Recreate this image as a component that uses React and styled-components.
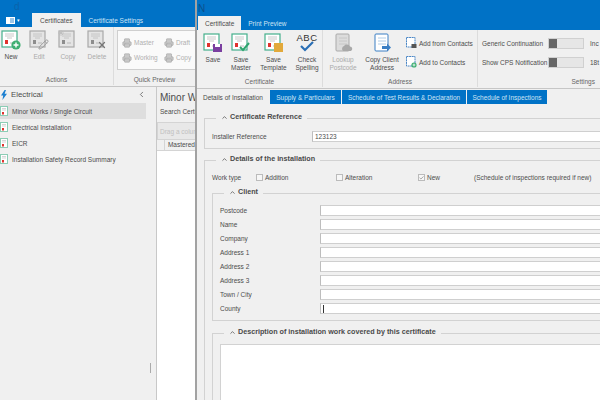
import styled, { createGlobalStyle } from "styled-components";
import { ChevronUp, ChevronLeft, Check, Pencil, X, Printer } from "lucide-react";

const Global = createGlobalStyle`
  html, body { margin: 0; padding: 0; height: 100%; overflow: hidden; background: #f0f0f0; }
  body { font-family: "Liberation Sans", Arial, sans-serif; font-size: 6.5px; color: #4c4c4c; }
`;

const Desktop = styled.div`
  width: 600px;
  height: 400px;
  display: flex;
  overflow: hidden;
`;

const BackWindow = styled.div`
  width: 195px;
  flex: none;
  display: flex;
  flex-direction: column;
  overflow: hidden;
`;

const FrontWindow = styled.div`
  flex: 1;
  min-width: 0;
  display: flex;
  flex-direction: column;
  border-left: 2px solid #a2a2a2;
  overflow: hidden;
`;

const TitleBar = styled.div`
  height: ${(p) => p.$h}px;
  flex: none;
  background: #0072c6;
  display: flex;
  align-items: center;
  padding-left: ${(p) => p.$pad}px;
  font-size: 10px;
  color: ${(p) => p.$ink};
`;

const TabRow = styled.div`
  height: 14px;
  flex: none;
  background: #0072c6;
  display: flex;
  align-items: stretch;
  padding-left: ${(p) => p.$pad}px;
`;

const AppButton = styled.div`
  width: 21px;
  margin-right: 5px;
  display: flex;
  align-items: center;
  gap: 2px;
  color: #fff;
  font-size: 5px;
`;

const AppGlyph = styled.span`
  width: 7px;
  height: 5px;
  border: 1px solid #fff;
  background: linear-gradient(90deg, #fff 50%, #9cc6e8 50%);
`;

const Tab = styled.div`
  display: flex;
  align-items: center;
  padding: 0 ${(p) => p.$x}px;
  white-space: nowrap;
  color: ${(p) => (p.$active ? "#4c4c4c" : "#cfe4f5")};
  background: ${(p) => (p.$active ? "#f0f0f0" : "transparent")};
`;

const Ribbon = styled.div`
  height: ${(p) => p.$h}px;
  flex: none;
  display: flex;
  background: #f0f0f0;
  border-bottom: 1px solid #c6c6c6;
  overflow: hidden;
`;

const Group = styled.div`
  display: flex;
  flex-direction: column;
  flex: none;
  width: ${(p) => p.$w}px;
  padding: 3px ${(p) => p.$px ?? 0}px 0;
  border-right: ${(p) => (p.$last ? "none" : "1px solid #dcdcdc")};
  margin-bottom: 1px;
  box-sizing: border-box;
`;

const GroupBody = styled.div`
  flex: 1;
  display: flex;
  min-height: 0;
`;

const GroupLabel = styled.div`
  height: 11px;
  line-height: 11px;
  white-space: nowrap;
  text-align: ${(p) => p.$align ?? "center"};
  color: #666;
`;

const ToolButton = styled.div`
  width: ${(p) => p.$w ?? 32}px;
  flex: none;
  display: flex;
  flex-direction: column;
  align-items: center;
  text-align: center;
  line-height: 8px;
  color: ${(p) => (p.$off ? "#aaa" : "#4c4c4c")};
  white-space: pre-line;
  svg { margin-bottom: 3px; flex: none; }
`;

const SpellIcon = styled.div`
  height: 20px;
  margin-bottom: 3px;
  display: flex;
  flex-direction: column;
  align-items: center;
  font-size: 9.5px;
  line-height: 9px;
  letter-spacing: 0.5px;
  color: #333;
  svg { margin: -1px 0 0; }
`;

const PreviewBox = styled.div`
  width: 82px;
  height: 40px;
  background: #fafafa;
  border: 1px solid #cfcfcf;
  box-sizing: border-box;
  display: grid;
  grid-template-columns: 42px 36px;
  align-content: center;
  row-gap: 5px;
  padding-left: 4px;
  color: #b0b0b0;
`;

const PreviewItem = styled.div`
  display: flex;
  align-items: center;
  gap: 2px;
`;

const SmallStack = styled.div`
  display: flex;
  flex-direction: column;
  gap: 7px;
  padding-top: 4px;
  margin-left: ${(p) => p.$ml ?? 0}px;
`;

const SmallButton = styled.div`
  display: flex;
  align-items: center;
  gap: 2px;
  height: 12px;
  white-space: nowrap;
`;

const SettingRow = styled.div`
  display: flex;
  align-items: center;
  height: 12px;
  white-space: nowrap;
`;

const SettingName = styled.div`
  width: 66px;
`;

const Toggle = styled.div`
  width: 36px;
  height: 11px;
  background: #e6e6e6;
  border: 1px solid #d0d0d0;
  box-sizing: border-box;
  margin-right: 6px;
  flex: none;
  &::before {
    content: "";
    display: block;
    width: 8px;
    height: 100%;
    background: #666;
  }
`;

const Split = styled.div`
  flex: 1;
  min-height: 0;
  display: flex;
`;

const Sidebar = styled.div`
  width: 156px;
  flex: none;
  border-right: 1px solid #c8c8c8;
  position: relative;
`;

const SideHeader = styled.div`
  height: 16px;
  padding: 0 0 1px 1px;
  display: flex;
  align-items: center;
  gap: 4px;
  font-size: 7.8px;
  width: 146px;
  box-sizing: border-box;
  svg:last-child { margin-left: auto; }
`;

const SideItem = styled.div`
  height: 16px;
  width: 146px;
  display: flex;
  align-items: center;
  gap: 4px;
  white-space: nowrap;
  background: ${(p) => (p.$active ? "#dedede" : "transparent")};
`;

const GripHandle = styled.div`
  position: absolute;
  left: 150px;
  top: 276px;
  width: 1px;
  height: 10px;
  background: #aaa;
`;

const ListPane = styled.div`
  flex: 1;
  min-width: 0;
  display: flex;
  flex-direction: column;
  overflow: hidden;
  white-space: nowrap;
`;

const ListTitle = styled.div`
  font-size: 10px;
  padding: 3px 0 0 3px;
  height: 15px;
  line-height: 15px;
`;

const ListSearch = styled.div`
  padding: 3px 0 0 3px;
  height: 14px;
`;

const DragBar = styled.div`
  height: 18px;
  background: #e8e8e8;
  border: 1px solid #d4d4d4;
  border-right: 0;
  display: flex;
  align-items: center;
  padding-left: 2px;
  color: #c0c0c0;
  box-sizing: border-box;
`;

const GridHead = styled.div`
  height: 11px;
  display: flex;
  background: #f0f0f0;
  border-bottom: 1px solid #d4d4d4;
  line-height: 10px;
  box-sizing: border-box;
`;

const GridCorner = styled.div`
  width: 11px;
  border-right: 1px solid #d4d4d4;
  margin-right: 3px;
`;

const GridBody = styled.div`
  flex: 1;
  background: #fff;
`;

const SubTabs = styled.div`
  height: 14px;
  flex: none;
  display: flex;
  gap: 1px;
  margin-top: 1px;
  white-space: nowrap;
`;

const SubTab = styled.div`
  width: ${(p) => p.$w}px;
  flex: none;
  display: flex;
  align-items: center;
  justify-content: center;
  color: ${(p) => (p.$active ? "#4c4c4c" : "#cfe4f5")};
  background: ${(p) => (p.$active ? "#f0f0f0" : "#0072c6")};
`;

const FormArea = styled.div`
  flex: 1;
  min-height: 0;
  overflow: hidden;
  padding: 8px 0 0 7px;
  width: 440px;
  box-sizing: border-box;
`;

const Section = styled.fieldset`
  margin: 0 0 ${(p) => p.$mb ?? 0}px;
  padding: 0 0 0 7px;
  border: 1px solid #d2d2d2;
  min-width: 0;
  box-sizing: border-box;
  height: ${(p) => (p.$h ? `${p.$h}px` : "auto")};
`;

const Legend = styled.legend`
  margin-left: 4px;
  padding: 0 5px 3px;
  font-size: 7.2px;
  font-weight: bold;
  line-height: 10px;
  color: #4a4a4a;
  white-space: nowrap;
  display: flex;
  align-items: center;
  gap: 2px;
`;

const RowGroup = styled.div`
  padding: ${(p) => p.$top}px 0 ${(p) => p.$bottom ?? 0}px;
`;

const FieldRow = styled.div`
  height: 14px;
  display: flex;
  align-items: center;
`;

const FieldLabel = styled.div`
  width: ${(p) => p.$w}px;
  flex: none;
`;

const TextBox = styled.div`
  flex: 1;
  height: 11px;
  background: #fff;
  border: 1px solid #cfcfcf;
  border-left-color: #bdbdbd;
  box-sizing: border-box;
  padding-left: 2px;
  line-height: 9px;
`;

const Caret = styled.span`
  display: inline-block;
  width: 1px;
  height: 8px;
  background: #333;
  vertical-align: top;
  margin-top: 1px;
`;

const WorkRow = styled.div`
  display: flex;
  align-items: center;
  height: 18px;
  margin: 1.5px 0 0.5px;
  white-space: nowrap;
`;

const CheckWrap = styled.label`
  width: ${(p) => p.$w}px;
  flex: none;
  display: flex;
  align-items: center;
  gap: 2px;
`;

const CheckBox = styled.span`
  width: 7px;
  height: 7px;
  box-sizing: border-box;
  border: 1px solid #bbb;
  background: #f6f6f6;
  display: inline-flex;
  align-items: center;
  justify-content: center;
  color: #777;
`;

const DescriptionBox = styled.div`
  height: 70px;
  margin-top: 4px;
  background: #fff;
  border: 1px solid #d2d2d2;
`;

// certificate sheet with an optional overlay in the bottom right corner
function Cert({ size = 20, grey, children }) {
  const frame = grey ? "#a9a9a9" : "#45b08c";
  const seal = grey ? "#8d8d8d" : "#e0332e";
  return (
    <svg width={size} height={size} viewBox="0 0 20 20">
      <rect x="1" y="1" width="15" height="16" fill={grey ? "#e4e4e4" : "#fff"} stroke={frame} strokeWidth="1.2" />
      <path d="M4 4h9M4 6h9M6 8h5" stroke={grey ? "#bcbcbc" : "#bbb"} strokeWidth="0.8" />
      <rect x="4" y="10" width="3" height="4" fill={seal} />
      <path d="M9 13h4" stroke="#aaa" strokeWidth="0.8" />
      {children}
    </svg>
  );
}

function MiniCert() {
  return (
    <svg width="8" height="10" viewBox="0 0 8 10" style={{ flex: "none" }}>
      <rect x="0.5" y="0.5" width="7" height="9" fill="#fff" stroke="#8ccdb5" />
      <path d="M2 2.5h4M2 4h4" stroke="#bbb" strokeWidth="0.6" />
      <rect x="2" y="6" width="2" height="2.5" fill="#e0332e" />
    </svg>
  );
}

function Bolt() {
  return (
    <svg width="6" height="10" viewBox="0 0 6 10" style={{ flex: "none" }}>
      <path d="M3.6 0L0 5.6h2.2L1.4 10 6 3.8H3.6L5 0z" fill="#1c7fd0" />
    </svg>
  );
}

function Book({ accent }) {
  return (
    <svg width="20" height="20" viewBox="0 0 20 20">
      <rect x="3" y="1" width="13" height="17" rx="1" fill={accent ? "#fff" : "#dcdcdc"} stroke={accent ? "#3b7fc4" : "#aaa"} />
      <path d="M6 5h8M6 8h8M6 11h8" stroke={accent ? "#9cbfe0" : "#c2c2c2"} strokeWidth="0.8" />
      {accent ? (
        <path d="M10 13h5v-2.5l4 4-4 4V16h-5z" fill="#3b7fc4" />
      ) : (
        <path d="M10 18a3 3 0 0 1 1-5 3.5 3.5 0 0 1 6 .5 2.4 2.4 0 0 1 1 4.5z" fill="#a9a9a9" />
      )}
    </svg>
  );
}

function ContactIcon({ add }) {
  return (
    <svg width="11" height="12" viewBox="0 0 11 12" style={{ flex: "none" }}>
      <rect x="0.5" y="0.5" width="8.5" height="9.5" fill="#fff" stroke="#4a86c5" strokeDasharray="2 0.6" />
      {add ? (
        <>
          <circle cx="8" cy="9" r="2.6" fill="#3fae72" />
          <path d="M8 7.6v2.8M6.6 9h2.8" stroke="#fff" strokeWidth="0.8" />
        </>
      ) : (
        <rect x="5.5" y="7" width="5" height="4" fill="#555" />
      )}
    </svg>
  );
}

function Preview({ label }) {
  return (
    <PreviewItem>
      <Printer size={10} color="#a5a5a5" fill="#c8c8c8" strokeWidth={1.5} />
      {label}
    </PreviewItem>
  );
}

const clientFields = ["Postcode", "Name", "Company", "Address 1", "Address 2", "Address 3", "Town / City"];

export default function App() {
  return (
    <Desktop>
      <Global />
      <BackWindow>
        <TitleBar $h={13} $pad={14} $ink="#0a63ab">d</TitleBar>
        <TabRow $pad={6}>
          <AppButton><AppGlyph />▾</AppButton>
          <Tab $active $x={8}>Certificates</Tab>
          <Tab $x={8}>Certificate Settings</Tab>
        </TabRow>
        <Ribbon $h={59}>
          <Group $w={114}>
            <GroupBody>
              <ToolButton $w={22}>
                <Cert>
                  <circle cx="15" cy="15" r="4.6" fill="#3fae72" />
                  <path d="M15 12.5v5M12.5 15h5" stroke="#fff" strokeWidth="1.4" />
                </Cert>
                New
              </ToolButton>
              <ToolButton $off $w={34}>
                <Cert grey><Pencil x="9" y="9" width="11" height="11" color="#999" /></Cert>
                Edit
              </ToolButton>
              <ToolButton $off $w={24}>
                <Cert grey>
                  <path d="M0 3h6M3 0v6M1 1l4 4M5 1L1 5" stroke="#bdbdbd" strokeWidth="0.8" />
                </Cert>
                Copy
              </ToolButton>
              <ToolButton $off $w={34}>
                <Cert grey><X x="10" y="10" width="10" height="10" color="#777" strokeWidth={3} /></Cert>
                Delete
              </ToolButton>
            </GroupBody>
            <GroupLabel>Actions</GroupLabel>
          </Group>
          <Group $w={81} $px={3} $last>
            <GroupBody>
              <PreviewBox>
                <Preview label="Master" />
                <Preview label="Draft" />
                <Preview label="Working" />
                <Preview label="Copy" />
              </PreviewBox>
            </GroupBody>
            <GroupLabel>Quick Preview</GroupLabel>
          </Group>
        </Ribbon>
        <Split>
          <Sidebar>
            <SideHeader>
              <Bolt />
              Electrical
              <ChevronLeft size={9} color="#555" />
            </SideHeader>
            <SideItem $active><MiniCert />Minor Works / Single Circuit</SideItem>
            <SideItem><MiniCert />Electrical Installation</SideItem>
            <SideItem><MiniCert />EICR</SideItem>
            <SideItem><MiniCert />Installation Safety Record Summary</SideItem>
            <GripHandle />
          </Sidebar>
          <ListPane>
            <ListTitle>Minor Works</ListTitle>
            <ListSearch>Search Certificates</ListSearch>
            <DragBar>Drag a column</DragBar>
            <GridHead><GridCorner />Mastered</GridHead>
            <GridBody />
          </ListPane>
        </Split>
      </BackWindow>

      <FrontWindow>
        <TitleBar $h={16} $pad={1} $ink="#0b4f8c">N</TitleBar>
        <TabRow $pad={1}>
          <Tab $active $x={7}>Certificate</Tab>
          <Tab $x={7}>Print Preview</Tab>
        </TabRow>
        <Ribbon $h={58}>
          <Group $w={126}>
            <GroupBody>
              <ToolButton $w={32}>
                <Cert>
                  <rect x="10" y="11" width="9" height="8" fill="#7a3fa0" />
                  <rect x="12" y="11" width="5" height="3" fill="#fff" />
                </Cert>
                Save
              </ToolButton>
              <ToolButton $w={24}>
                <Cert><path d="M9 14l3 3 6-7" fill="none" stroke="#2fa56f" strokeWidth="2" /></Cert>
                {"Save\nMaster"}
              </ToolButton>
              <ToolButton $w={41}>
                <Cert><rect x="10" y="10" width="9" height="9" fill="#e2a93b" /></Cert>
                {"Save\nTemplate"}
              </ToolButton>
              <ToolButton $w={26}>
                <SpellIcon>
                  ABC
                  <svg width="14" height="11" viewBox="0 0 14 11">
                    <path d="M1 5l4 4 8-8" fill="none" stroke="#2a6fb5" strokeWidth="2.2" />
                  </svg>
                </SpellIcon>
                {"Check\nSpelling"}
              </ToolButton>
            </GroupBody>
            <GroupLabel>Certificate</GroupLabel>
          </Group>
          <Group $w={155} $px={4}>
            <GroupBody>
              <ToolButton $off $w={32}>
                <Book />
                {"Lookup\nPostcode"}
              </ToolButton>
              <ToolButton $w={46}>
                <Book accent />
                {"Copy Client\nAddress"}
              </ToolButton>
              <SmallStack $ml={1}>
                <SmallButton><ContactIcon />Add from Contacts</SmallButton>
                <SmallButton><ContactIcon add />Add to Contacts</SmallButton>
              </SmallStack>
            </GroupBody>
            <GroupLabel>Address</GroupLabel>
          </Group>
          <Group $w={121} $px={4} $last>
            <GroupBody>
              <SmallStack>
                <SettingRow><SettingName>Generic Continuation</SettingName><Toggle />Inc</SettingRow>
                <SettingRow><SettingName>Show CPS Notification</SettingName><Toggle />18t</SettingRow>
              </SmallStack>
            </GroupBody>
            <GroupLabel $align="right">Settings</GroupLabel>
          </Group>
        </Ribbon>
        <SubTabs>
          <SubTab $active $w={72}>Details of Installation</SubTab>
          <SubTab $w={71}>Supply &amp; Particulars</SubTab>
          <SubTab $w={124}>Schedule of Test Results &amp; Declaration</SubTab>
          <SubTab $w={80}>Schedule of Inspections</SubTab>
        </SubTabs>
        <FormArea>
          <Section $mb={5} $h={37}>
            <Legend><ChevronUp size={7} strokeWidth={2.5} />Certificate Reference</Legend>
            <RowGroup $top={4}>
              <FieldRow>
                <FieldLabel $w={100}>Installer Reference</FieldLabel>
                <TextBox>123123</TextBox>
              </FieldRow>
            </RowGroup>
          </Section>
          <Section $h={260}>
            <Legend><ChevronUp size={7} strokeWidth={2.5} />Details of the installation</Legend>
            <WorkRow>
              <FieldLabel $w={44}>Work type</FieldLabel>
              <CheckWrap $w={80}><CheckBox />Addition</CheckWrap>
              <CheckWrap $w={82}><CheckBox />Alteration</CheckWrap>
              <CheckWrap $w={56}><CheckBox><Check size={6} strokeWidth={3} /></CheckBox>New</CheckWrap>
              (Schedule of inspections required if new)
            </WorkRow>
            <Section $mb={6}>
              <Legend><ChevronUp size={7} strokeWidth={2.5} />Client</Legend>
              <RowGroup $top={3} $bottom={5}>
                {clientFields.map((name) => (
                  <FieldRow key={name}>
                    <FieldLabel $w={100}>{name}</FieldLabel>
                    <TextBox />
                  </FieldRow>
                ))}
                <FieldRow>
                  <FieldLabel $w={100}>County</FieldLabel>
                  <TextBox><Caret /></TextBox>
                </FieldRow>
              </RowGroup>
            </Section>
            <Section>
              <Legend><ChevronUp size={7} strokeWidth={2.5} />Description of installation work covered by this certificate</Legend>
              <DescriptionBox />
            </Section>
          </Section>
        </FormArea>
      </FrontWindow>
    </Desktop>
  );
}
